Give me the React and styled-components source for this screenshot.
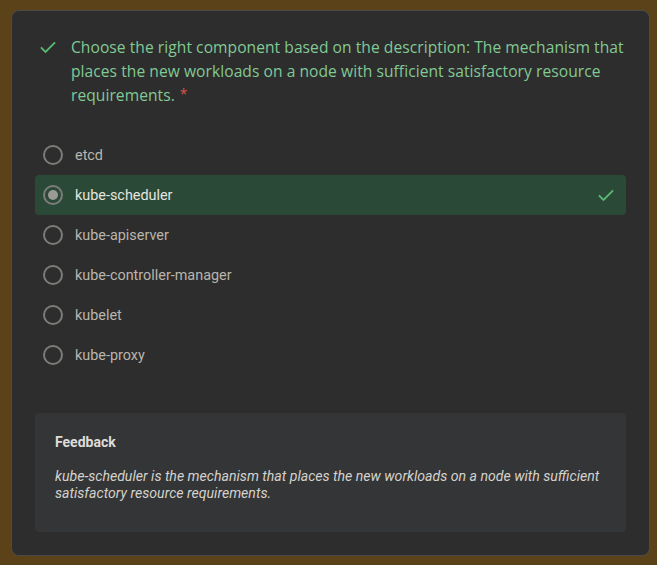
import React from "react";
import styled, { createGlobalStyle } from "styled-components";

const GlobalStyle = createGlobalStyle`
  html, body {
    background-color: #5b4219;
  }
  body {
    margin: 10px 7px 10px 11px;
    font-family: Roboto, "Liberation Sans", sans-serif;
  }
`;

const Card = styled.div`
  background-color: #2d2d2d;
  border: 1px solid #4a4a48;
  border-radius: 8px;
  padding: 24px 23px 22px 23px;
  height: 546px;
  box-sizing: border-box;
`;

const Header = styled.div`
  display: flex;
  align-items: flex-start;
  gap: 13px;
  padding-left: 3px;
`;

const HeaderIcon = styled.div`
  flex: 0 0 auto;
  width: 20px;
  height: 24px;
  display: flex;
  align-items: center;
`;

const Question = styled.div`
  color: #81c995;
  font-family: "Open Sans", "Noto Sans", sans-serif;
  font-size: 15.6px;
  line-height: 24px;
  letter-spacing: 0.05px;
`;

const Required = styled.span`
  display: inline-block;
  color: #d9534f;
  margin-left: 5px;
  font-size: 14px;
  line-height: 16px;
  vertical-align: 2px;
`;

const Options = styled.div`
  margin-top: 28px;
  display: flex;
  flex-direction: column;
`;

const Row = styled.div`
  display: flex;
  align-items: center;
  height: 40px;
  padding: 0 10px 0 8px;
  border-radius: 4px;
  background-color: ${(p) => (p.selected ? "#2a4a37" : "transparent")};
`;

const Radio = styled.div`
  width: 20px;
  height: 20px;
  box-sizing: border-box;
  border: 2px solid #7d7c79;
  border-radius: 50%;
  display: flex;
  align-items: center;
  justify-content: center;
  &::after {
    content: "";
    display: ${(p) => (p.checked ? "block" : "none")};
    width: 10px;
    height: 10px;
    border-radius: 50%;
    background-color: #9c9a93;
  }
`;

const Label = styled.span`
  flex: 1;
  margin-left: 12px;
  font-size: 14.4px;
  color: ${(p) => (p.selected ? "#e6e4df" : "#bab5ac")};
`;

const Feedback = styled.div`
  margin-top: 38px;
  background-color: #343536;
  border-radius: 4px;
  padding: 21px 20px 30px 20px;
`;

const FeedbackTitle = styled.div`
  font-size: 14px;
  font-weight: 700;
  color: #dedcd8;
  line-height: 17px;
`;

const FeedbackText = styled.div`
  margin-top: 17px;
  font-size: 14.1px;
  font-style: italic;
  color: #d4d2cd;
  line-height: 17px;
`;

const Check = ({ size = 18, color = "#5bb974" }) => (
  <svg width={size} height={size} viewBox="0 0 24 24">
    <path d="M3.5 12.5 L9 18 L20.5 6.5" fill="none" stroke={color} strokeWidth="2.2" />
  </svg>
);

const options = [
  "etcd",
  "kube-scheduler",
  "kube-apiserver",
  "kube-controller-manager",
  "kubelet",
  "kube-proxy",
];

const App = () => {
  const answer = "kube-scheduler";
  return (
    <>
      <GlobalStyle />
      <Card>
        <Header>
          <HeaderIcon>
            <Check size={20} />
          </HeaderIcon>
          <Question>
            Choose the right component based on the description: The mechanism
            that places the new workloads on a node with sufficient satisfactory
            resource requirements.<Required>*</Required>
          </Question>
        </Header>
        <Options>
          {options.map((opt) => (
            <Row key={opt} selected={opt === answer}>
              <Radio checked={opt === answer} />
              <Label selected={opt === answer}>{opt}</Label>
              {opt === answer && <Check size={20} />}
            </Row>
          ))}
        </Options>
        <Feedback>
          <FeedbackTitle>Feedback</FeedbackTitle>
          <FeedbackText>
            kube-scheduler is the mechanism that places the new workloads on a
            node with sufficient satisfactory resource requirements.
          </FeedbackText>
        </Feedback>
      </Card>
    </>
  );
};

export default App;
